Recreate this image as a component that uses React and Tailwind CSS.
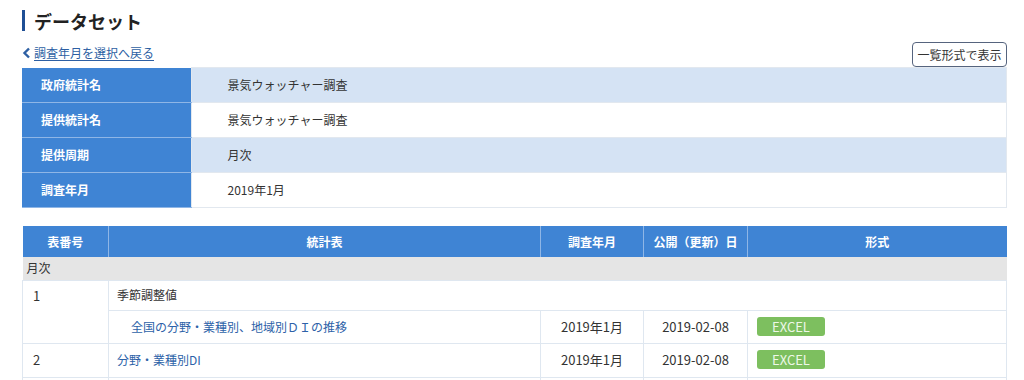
const font = { fontFamily: '"Noto Sans CJK JP", "Noto Sans", sans-serif' };

const info = [
  ["政府統計名", "景気ウォッチャー調査"],
  ["提供統計名", "景気ウォッチャー調査"],
  ["提供周期", "月次"],
  ["調査年月", "2019年1月"],
];

function Excel() {
  return (
    <span className="inline-flex h-[19px] w-[68px] items-center justify-center rounded-[3px] bg-[#7dbf5f] text-[13px] leading-none text-[#eef8e8]">
      EXCEL
    </span>
  );
}

export default function App() {
  return (
    <div className="min-h-[380px] bg-white px-[22px] pt-[10px] text-[#333]" style={font}>
      {/* Title */}
      <div className="flex h-[21px] items-center border-l-[3px] border-[#1f4f95] pl-[9px]">
        <h1 className="text-[18px] font-bold leading-none text-[#222]">データセット</h1>
      </div>

      {/* back link + list button */}
      <div className="mt-[11px] flex h-[25px] w-[985px] items-center justify-between">
        <a className="-mt-[3px] flex items-center text-[12px] leading-none text-[#2d5fa3] underline underline-offset-2">
          <svg width="10" height="12" viewBox="0 0 10 12" className="mr-[2px]">
            <path d="M7 1.5 L2.5 6 L7 10.5" fill="none" stroke="#2d5fa3" strokeWidth="2.4" />
          </svg>
          調査年月を選択へ戻る
        </a>
        <button className="h-[25px] w-[95px] rounded-[4px] border border-[#56647e] bg-white text-[12px] leading-none text-[#333]">
          一覧形式で表示
        </button>
      </div>

      {/* Info table */}
      <table className="w-[985px] border-collapse">
        <tbody>
          {info.map(([k, v], i) => (
            <tr key={k} className="h-[35px]">
              <th className="w-[169px] border-b border-[#8fb6e6] bg-[#3f84d4] pl-[19px] text-left text-[12px] font-bold text-white">
                {k}
              </th>
              <td
                className={
                  "border border-[#e2e8ef] pl-[36px] text-[12px] text-[#333] " +
                  (i % 2 === 0 ? "bg-[#d5e3f4]" : "bg-white")
                }
              >
                {v}
              </td>
            </tr>
          ))}
        </tbody>
      </table>

      {/* Data table */}
      <table className="mt-[18px] w-[985px] border-collapse text-[13px]">
        <thead>
          <tr className="h-[31px] bg-[#3f84d4] text-[12px] font-bold text-white">
            <th className="w-[86px] border-r border-[#8fb6e6]">表番号</th>
            <th className="w-[432px] border-r border-[#8fb6e6]">統計表</th>
            <th className="w-[103px] border-r border-[#8fb6e6]">調査年月</th>
            <th className="w-[104px] border-r border-[#8fb6e6]">公開（更新）日</th>
            <th>形式</th>
          </tr>
        </thead>
        <tbody>
          <tr className="h-[23px] bg-[#e5e5e5]">
            <td colSpan={5} className="pl-[4px] text-[12px] text-[#333]">月次</td>
          </tr>
          <tr className="h-[30px]">
            <td rowSpan={2} className="border border-[#dfe7f0] pl-[10px] pt-[5px] align-top">1</td>
            <td colSpan={4} className="border border-[#dfe7f0] pl-[8px] text-[12px]">季節調整値</td>
          </tr>
          <tr className="h-[33px]">
            <td className="border border-[#dfe7f0] pl-[22px] text-[12px] text-[#2d62a8]">全国の分野・業種別、地域別ＤＩの推移</td>
            <td className="border border-[#dfe7f0] text-center">2019年1月</td>
            <td className="border border-[#dfe7f0] text-center">2019-02-08</td>
            <td className="border border-[#dfe7f0] pl-[9px]"><Excel /></td>
          </tr>
          <tr className="h-[34px]">
            <td className="border border-[#dfe7f0] pl-[10px]">2</td>
            <td className="border border-[#dfe7f0] pl-[8px] text-[12px] text-[#2d62a8]">分野・業種別DI</td>
            <td className="border border-[#dfe7f0] text-center">2019年1月</td>
            <td className="border border-[#dfe7f0] text-center">2019-02-08</td>
            <td className="border border-[#dfe7f0] pl-[9px]"><Excel /></td>
          </tr>
          <tr className="h-[34px]">
            <td className="border border-[#dfe7f0]"></td>
            <td className="border border-[#dfe7f0]"></td>
            <td className="border border-[#dfe7f0]"></td>
            <td className="border border-[#dfe7f0]"></td>
            <td className="border border-[#dfe7f0]"></td>
          </tr>
        </tbody>
      </table>
    </div>
  );
}
